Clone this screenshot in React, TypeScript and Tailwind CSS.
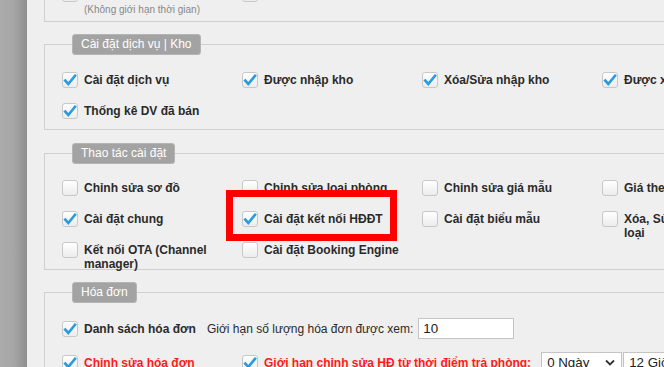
import React from 'react';

const font = { fontFamily: '"Liberation Sans", Arial, sans-serif' };

const Box = ({ checked }: { checked?: boolean }) => (
  <span className="w-[16px] h-[16px] shrink-0 rounded-[3px] border border-[#c8c8c8] bg-gradient-to-b from-white to-[#ececec] flex items-center justify-center">
    {checked && (
      <svg width="14" height="14" viewBox="0 0 14 14">
        <path d="M2.3 7.6 L5.3 11 L12 2.8" fill="none" stroke="#2b9be0" strokeWidth="2.7" strokeLinecap="square" />
      </svg>
    )}
  </span>
);

const Item = ({ label, checked }: { label: React.ReactNode; checked?: boolean }) => (
  <div className="flex items-start gap-[6px] h-[16px]">
    <Box checked={checked} />
    <span className="mt-[1px] w-[150px] text-[12px] leading-[14px] font-bold text-[#2a2a2a]">{label}</span>
  </div>
);

const Group = ({ title, className, children }: { title: string; className?: string; children: React.ReactNode }) => (
  <fieldset className={`w-[700px] border border-[#cfcfcf] pl-[17px] ${className ?? ''}`}>
    <legend className="ml-[10px] h-[21px] px-[8px] rounded-[3px] border border-[#b5b5b5] bg-[#a3a3a3] text-white text-[12px] leading-[19px]">
      {title}
    </legend>
    {children}
  </fieldset>
);

export default function App() {
  return (
    <div className="relative w-[664px] h-[367px] overflow-hidden flex" style={font}>
      {/* dải xám bên trái */}
      <div className="w-[27px] shrink-0 bg-gradient-to-r from-[#ababab] via-[#a6a6a6] to-[#8f8f8f]" />

      <div className="flex-1 flex flex-col bg-[#efefef] pl-[17px]">
        {/* phần trên bị cắt */}
        <div className="w-[700px] h-[22px] shrink-0 flex flex-col border-x border-b border-[#cfcfcf] pl-[17px]">
          <div className="grid grid-cols-[180px_180px_180px_180px] -mt-[14px]">
            <div>
              <Box />
              <div className="pl-[22px] mt-[2px] text-[10px] leading-[12px] text-[#888]">(Không giới hạn thời gian)</div>
            </div>
            <div>
              <Box />
            </div>
          </div>
        </div>

        <Group title="Cài đặt dịch vụ | Kho" className="mt-[12px] pb-[10px]">
          <div className="grid grid-cols-[180px_180px_180px_180px] gap-y-[15px] pt-[17px]">
            <Item label="Cài đặt dịch vụ" checked />
            <Item label="Được nhập kho" checked />
            <Item label="Xóa/Sửa nhập kho" checked />
            <Item label="Được xuất kho" checked />
            <Item label="Thống kê DV đã bán" checked />
          </div>
        </Group>

        <Group title="Thao tác cài đặt" className="mt-[13px] pb-[11px]">
          <div className="grid grid-cols-[180px_180px_180px_180px] gap-y-[15px] pt-[16px]">
            <Item label="Chỉnh sửa sơ đồ" />
            <Item label="Chỉnh sửa loại phòng" />
            <Item label="Chỉnh sửa giá mẫu" />
            <Item label="Giá theo ngày" />
            <Item label="Cài đặt chung" checked />
            <Item label="Cài đặt kết nối HĐĐT" checked />
            <Item label="Cài đặt biểu mẫu" />
            <Item label={<>Xóa, Sửa giá theo ngày<br />loại</>} />
            <Item label="Kết nối OTA (Channel manager)" />
            <Item label="Cài đặt Booking Engine" />
          </div>
        </Group>

        <Group title="Hóa đơn" className="mt-[12px] pb-[10px]">
          <div className="pt-[15px] flex items-center">
            <div className="w-[145px] flex items-center gap-[6px]">
              <Box checked />
              <span className="text-[12px] font-bold text-[#2a2a2a]">Danh sách hóa đơn</span>
            </div>
            <span className="text-[12px] text-[#2a2a2a]">Giới hạn số lượng hóa đơn được xem:</span>
            <div className="ml-[5px] w-[96px] h-[21px] border border-[#c4c4c4] bg-white text-[13.33px] leading-[19px] pl-[4px] text-[#222]">10</div>
          </div>
          <div className="mt-[13px] flex items-center">
            <div className="w-[180px] flex items-center gap-[6px]">
              <Box checked />
              <span className="text-[12px] font-bold text-[#ff1a1a]">Chỉnh sửa hóa đơn</span>
            </div>
            <div className="flex items-center gap-[6px]">
              <Box checked />
              <span className="text-[12px] font-bold text-[#ff1a1a]">Giới hạn chỉnh sửa HĐ từ thời điểm trả phòng:</span>
            </div>
            <div className="ml-[10px] w-[81px] h-[21px] shrink-0 border border-[#c4c4c4] bg-white flex items-center justify-between pl-[5px] pr-[6px] text-[13.33px] text-[#222]">
              <span>0 Ngày</span>
              <svg width="10" height="7" viewBox="0 0 10 7"><path d="M1 1.5 L5 5.5 L9 1.5" fill="none" stroke="#333" strokeWidth="1.8" /></svg>
            </div>
            <div className="ml-[1px] w-[81px] h-[21px] shrink-0 border border-[#c4c4c4] bg-white flex items-center pl-[5px] text-[13.33px] text-[#222]">
              <span>12 Giờ</span>
            </div>
          </div>
        </Group>
      </div>

      {/* khung đỏ đánh dấu */}
      <div className="absolute left-[226px] top-[190px] w-[171px] h-[51px] border-[7px] border-[#ff0000]" />
    </div>
  );
}
